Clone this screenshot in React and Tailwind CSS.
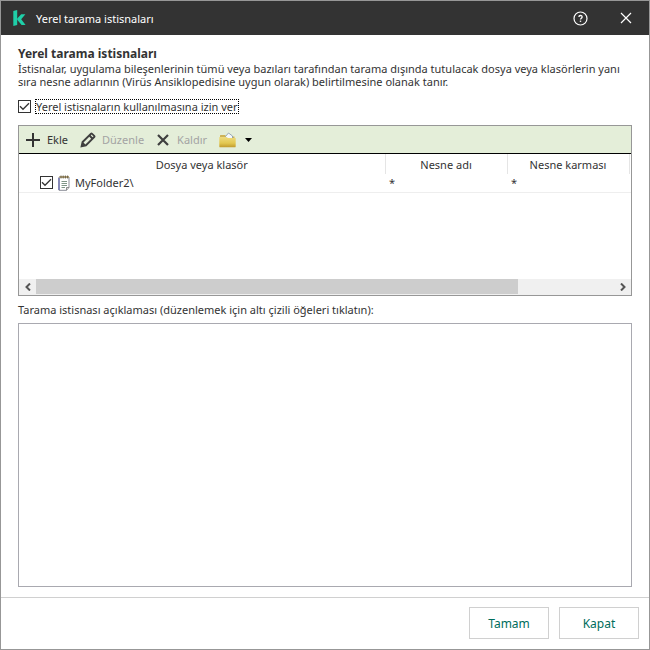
import React, { useState } from 'react';

const initialExclusions = [
  { id: 1, path: 'MyFolder2\\', objectName: '*', objectHash: '*', enabled: true },
];

const Checkbox = ({ id, label, checked, onChange }) => (
  <span className="grid shrink-0">
    <input
      id={id}
      type="checkbox"
      aria-label={label}
      checked={checked}
      onChange={onChange}
      className="col-start-1 row-start-1 h-[13px] w-[13px] appearance-none border border-[#333333] bg-white"
    />
    {checked && (
      <svg viewBox="0 0 13 13" className="pointer-events-none col-start-1 row-start-1 h-[13px] w-[13px]">
        <path d="M2 6.3 L5 9.3 L11 3.3" fill="none" stroke="#333333" strokeWidth="1.3" />
      </svg>
    )}
  </span>
);

const LogoIcon = () => (
  <svg viewBox="0 0 13 16" className="h-4 w-[13px]">
    <path d="M0.3 1 L4.2 0 V15 L0.3 16 Z" fill="#1fcfa8" />
    <path d="M4.2 8.6 L8.2 4.2 H12.4 L8.2 9.2 L12.6 15 H8.6 L4.2 9.8 Z" fill="#1fcfa8" />
  </svg>
);

const HelpIcon = () => (
  <svg viewBox="0 0 15 15" className="h-[15px] w-[15px]" fill="none" stroke="#ffffff">
    <circle cx="7.5" cy="7.5" r="6.5" strokeWidth="1.2" />
    <path d="M5.9 6 C5.9 4 9.1 4 9.1 5.9 C9.1 7.2 7.5 7.1 7.5 8.6" strokeWidth="1.3" />
    <path d="M7.5 9.6 V10.9" strokeWidth="1.4" />
  </svg>
);

const CloseIcon = () => (
  <svg viewBox="0 0 12 12" className="h-3 w-3">
    <path d="M1 1 L11 11 M11 1 L1 11" stroke="#ffffff" strokeWidth="1.2" />
  </svg>
);

const PlusIcon = () => (
  <svg viewBox="0 0 14 14" className="h-[14px] w-[14px]">
    <path d="M7 0 V14 M0 7 H14" stroke="#333333" strokeWidth="2" />
  </svg>
);

const PencilIcon = () => (
  <svg viewBox="0 0 16 16" className="h-4 w-4">
    <path
      fillRule="evenodd"
      fill="#3f3f3f"
      d="M0.4 15.6 L1.7 9.6 L10.4 0.9 Q11.4 0 12.5 0.9 L15.1 3.5 Q16 4.6 15.1 5.6 L6.4 14.3 Z M3.5 10.6 L5.4 12.5 L11.2 6.7 L9.3 4.8 Z M10.8 3.4 L12.6 5.2 L13.5 4.4 L11.6 2.5 Z"
    />
  </svg>
);

const RemoveIcon = () => (
  <svg viewBox="0 0 12 12" className="h-3 w-3">
    <path d="M1 1 L11 11 M11 1 L1 11" stroke="#3f3f3f" strokeWidth="2.2" />
  </svg>
);

const FolderIcon = () => (
  <svg viewBox="0 0 17 16" className="h-4 w-[17px]">
    <defs>
      <linearGradient id="folder" x1="0" y1="0" x2="0" y2="1">
        <stop offset="0" stopColor="#eedb7e" />
        <stop offset="0.6" stopColor="#e2c750" />
        <stop offset="1" stopColor="#c09a2c" />
      </linearGradient>
    </defs>
    <path d="M1 3.6 Q1 3 1.6 3 H6 L7.5 4.5 H15.5 V14 H1 Z" fill="#cdb256" />
    <path d="M6.5 4.5 L9.5 1 L13.5 4 V7 H7 Z" fill="#f4f8fc" stroke="#8296a8" strokeWidth="0.8" />
    <path d="M0.3 5 H7.5 L9 6 H16.7 V14.4 Q16.7 15.3 15.7 15.3 H1.3 Q0.3 15.3 0.3 14.4 Z" fill="url(#folder)" />
  </svg>
);

const NotepadIcon = () => (
  <svg viewBox="0 0 12 16" className="h-4 w-3">
    <path d="M1 2 H11 V12.5 L8.5 15.3 H1 Z" fill="#ffffff" stroke="#8a8c96" />
    <path d="M1 3 V15" stroke="#6d70b0" strokeWidth="1.4" />
    <path d="M8.5 15.3 V12.5 H11" fill="#d4d4d4" stroke="#777777" strokeWidth="0.8" />
    <path d="M1.5 2 H11" stroke="#b39a66" strokeWidth="1.6" />
    <path d="M3 0.5 V3.5 M5.2 0.5 V3.5 M7.4 0.5 V3.5 M9.6 0.5 V3.5" stroke="#54503f" strokeWidth="0.8" />
    <path d="M3.5 6.5 H9 M3.5 8.5 H9 M3.5 10.5 H9 M3.5 12.5 H7" stroke="#6f8878" strokeWidth="0.9" />
  </svg>
);

const TitleBar = () => (
  <header className="flex h-[34px] items-center bg-[#333333] pl-3 pr-[17px] text-white">
    <LogoIcon />
    <h1 className="ml-[10px] flex-1">Yerel tarama istisnaları</h1>
    <div className="flex items-center gap-8">
      <button type="button" aria-label="Yardım">
        <HelpIcon />
      </button>
      <button type="button" aria-label="Kapat">
        <CloseIcon />
      </button>
    </div>
  </header>
);

const Toolbar = () => (
  <div className="flex h-7 items-center gap-3 border-b border-black bg-[#e4eed9] px-[7px]">
    <button type="button" className="flex items-center gap-[7px]">
      <PlusIcon />
      Ekle
    </button>
    <button type="button" disabled className="flex items-center gap-[6px] text-[#a3a3a3]">
      <PencilIcon />
      Düzenle
    </button>
    <button type="button" disabled className="flex items-center gap-2 pl-[1px] text-[#a3a3a3]">
      <RemoveIcon />
      Kaldır
    </button>
    <button type="button" aria-label="İçe ve dışa aktar" className="flex items-center gap-[9px]">
      <FolderIcon />
      <svg viewBox="0 0 7 4" className="h-1 w-[7px]">
        <path d="M0 0 H7 L3.5 4 Z" fill="#000000" />
      </svg>
    </button>
  </div>
);

const ExclusionTable = ({ rows, onToggle }) => (
  <table className="w-full table-fixed border-collapse text-left">
    <thead>
      <tr className="h-5 text-center">
        <th className="border-r border-[#e5e5e5] font-normal">Dosya veya klasör</th>
        <th className="w-[122px] border-r border-[#e5e5e5] font-normal">Nesne adı</th>
        <th className="w-[122px] border-r border-[#e5e5e5] font-normal">Nesne karması</th>
        <td className="w-[2px]"></td>
      </tr>
    </thead>
    <tbody>
      {rows.map((row) => (
        <tr key={row.id} className="h-[18px] border-b border-[#eeeeee]">
          <td>
            <div className="flex items-center pl-[21px]">
              <Checkbox label={row.path} checked={row.enabled} onChange={() => onToggle(row.id)} />
              <span className="ml-[5px] mr-[5px]">
                <NotepadIcon />
              </span>
              {row.path}
            </div>
          </td>
          <td className="pl-1">{row.objectName}</td>
          <td className="pl-1">{row.objectHash}</td>
          <td></td>
        </tr>
      ))}
    </tbody>
  </table>
);

const ScrollBar = () => (
  <div className="flex h-4 bg-[#f0f0f0]">
    <button type="button" aria-label="Sola kaydır" className="flex w-[17px] items-center justify-center">
      <svg viewBox="0 0 6 8" className="h-2 w-[6px]">
        <path d="M5 0.5 L1.5 4 L5 7.5" fill="none" stroke="#555555" strokeWidth="2" />
      </svg>
    </button>
    <div className="flex-1">
      <div className="h-[15px] w-5/6 bg-[#cdcdcd]"></div>
    </div>
    <button type="button" aria-label="Sağa kaydır" className="flex w-[17px] items-center justify-center">
      <svg viewBox="0 0 6 8" className="h-2 w-[6px]">
        <path d="M1 0.5 L4.5 4 L1 7.5" fill="none" stroke="#555555" strokeWidth="2" />
      </svg>
    </button>
  </div>
);

const App = () => {
  const [allowLocal, setAllowLocal] = useState(true);
  const [exclusions, setExclusions] = useState(initialExclusions);
  const [description, setDescription] = useState('');

  const handleToggle = (id) => {
    setExclusions((rows) => rows.map((row) => (row.id === id ? { ...row, enabled: !row.enabled } : row)));
  };

  return (
    <div className="flex min-h-screen flex-col border border-[#979797] bg-white font-['Noto_Sans',sans-serif] text-[11px] leading-[13px] text-[#333333]">
      <TitleBar />

      <main className="flex flex-1 flex-col px-[17px] pb-[10px] pt-[11px]">
        <h2 className="text-[12px] font-bold leading-4">Yerel tarama istisnaları</h2>
        <p>
          İstisnalar, uygulama bileşenlerinin tümü veya bazıları tarafından tarama dışında tutulacak dosya veya
          klasörlerin yanı sıra nesne adlarının (Virüs Ansiklopedisine uygun olarak) belirtilmesine olanak tanır.
        </p>

        <div className="mt-3 flex items-center gap-[5px]">
          <Checkbox id="allow-local" checked={allowLocal} onChange={(e) => setAllowLocal(e.target.checked)} />
          <label htmlFor="allow-local" className="outline-1 outline-dotted outline-black">
            Yerel istisnaların kullanılmasına izin ver
          </label>
        </div>

        <section className="mt-3 flex h-[171px] flex-col border border-[#979797]">
          <Toolbar />
          <div className="flex-1">
            <ExclusionTable rows={exclusions} onToggle={handleToggle} />
          </div>
          <ScrollBar />
        </section>

        <label htmlFor="description" className="mt-[7px]">
          Tarama istisnası açıklaması (düzenlemek için altı çizili öğeleri tıklatın):
        </label>
        {/* fills whatever height is left above the footer */}
        <textarea
          id="description"
          value={description}
          onChange={(e) => setDescription(e.target.value)}
          className="mt-[7px] min-h-32 flex-1 resize-none border border-[#a9a9b0] p-1 outline-none"
        />
      </main>

      <footer className="flex justify-end gap-[10px] border-t border-[#d0d0d0] px-[10px] pb-[10px] pt-[9px] text-[12px] text-[#006d5c]">
        <button type="button" className="h-8 w-20 border border-[#d0d0d0]">
          Tamam
        </button>
        <button type="button" className="h-8 w-20 border border-[#d0d0d0]">
          Kapat
        </button>
      </footer>
    </div>
  );
};

export default App;
